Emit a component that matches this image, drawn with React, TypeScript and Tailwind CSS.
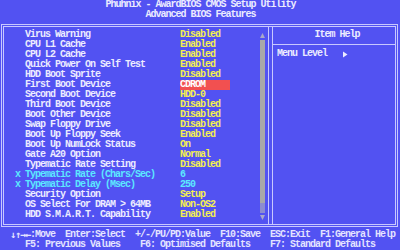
import React from "react";

type Row = { m?: string; label: string; value: string; kind?: "cyan" | "sel" };

const rows: Row[] = [
  { label: "Virus Warning", value: "Disabled" },
  { label: "CPU L1 Cache", value: "Enabled" },
  { label: "CPU L2 Cache", value: "Enabled" },
  { label: "Quick Power On Self Test", value: "Enabled" },
  { label: "HDD Boot Sprite", value: "Disabled" },
  { label: "First Boot Device", value: "CDROM", kind: "sel" },
  { label: "Second Boot Device", value: "HDD-0" },
  { label: "Third Boot Device", value: "Disabled" },
  { label: "Boot Other Device", value: "Disabled" },
  { label: "Swap Floppy Drive", value: "Disabled" },
  { label: "Boot Up Floppy Seek", value: "Enabled" },
  { label: "Boot Up NumLock Status", value: "On" },
  { label: "Gate A20 Option", value: "Normal" },
  { label: "Typematic Rate Setting", value: "Disabled" },
  { m: "x", label: "Typematic Rate (Chars/Sec)", value: "6", kind: "cyan" },
  { m: "x", label: "Typematic Delay (Msec)", value: "250", kind: "cyan" },
  { label: "Security Option", value: "Setup" },
  { label: "OS Select For DRAM > 64MB", value: "Non-OS2" },
  { label: "HDD S.M.A.R.T. Capability", value: "Enabled" },
];

export default function App() {
  return (
    <div
      className="w-[400px] h-[250px] bg-[#5252f2] text-[#ececff] font-bold text-[10px] leading-[10px] tracking-[-1px] overflow-hidden"
      style={{ fontFamily: '"Liberation Mono", "DejaVu Sans Mono", monospace' }}
    >
      <div className="h-[20px] text-center whitespace-pre">
        <div className="h-[10px] pl-[1px]">Phuhnix - AwardBIOS CMOS Setup Utility</div>
        <div className="h-[10px] pl-[1px]">Advanced BIOS Features</div>
      </div>
      <div className="h-[4px]" />
      <div className="ml-[1px] w-[397px] h-[203px] border border-[#c8c8ff] p-[1px]">
        <div className="w-full h-full border border-[#c8c8ff] flex">
          {/* left pane */}
          <div className="w-[262px] flex pt-[3px]">
            <div className="w-[256px]">
              {rows.map((r, i) => {
                const labelColor = r.kind === "cyan" ? "text-[#5ce8ff]" : "text-[#ececff]";
                const valueColor =
                  r.kind === "cyan"
                    ? "text-[#5ce8ff]"
                    : r.kind === "sel"
                    ? "text-white bg-[#f25050]"
                    : "text-[#f4f050]";
                return (
                  <div key={i} className="h-[10px] flex whitespace-pre">
                    <div className={`w-[21px] pl-[11px] ${labelColor}`}>{r.m ?? ""}</div>
                    <div className={`w-[155px] ${labelColor}`}>{r.label}</div>
                    <div className={`w-[50px] h-[10px] ${valueColor}`}>{r.value}</div>
                  </div>
                );
              })}
            </div>
            {/* scrollbar */}
            <div className="w-[5px] flex flex-col items-center">
              <svg width="5" height="7" viewBox="0 0 5 7" className="mt-[2px]">
                <polygon points="2.5,1 5,6 0,6" fill="#a8a8c8" />
              </svg>
              <div className="w-[5px] h-[163px] mt-[1px] bg-[#a8a8a8]" />
              <div className="w-[5px] h-[10px] bg-[#8c8cd0]" />
              <svg width="5" height="7" viewBox="0 0 5 7" className="mt-[1px]">
                <polygon points="0,1 5,1 2.5,6" fill="#a8a8c8" />
              </svg>
            </div>
          </div>
          {/* divider */}
          <div className="w-[2px]" />
          <div className="w-[1px] h-full bg-[#c8c8ff]" />
          <div className="w-[3px]" />
          <div className="w-[1px] h-full bg-[#c8c8ff]" />
          {/* right pane */}
          <div className="flex-1 pt-[3px]">
            <div className="h-[10px] text-center pl-[6px]">Item Help</div>
            <div className="h-[5px] border-b border-[#c8c8ff]" />
            <div className="h-[4px]" />
            <div className="h-[10px] flex items-center whitespace-pre pl-[4px]">
              <span>Menu Level</span>
              <svg width="5" height="7" viewBox="0 0 5 7" className="ml-[16px]">
                <polygon points="0,0.5 4.5,3.5 0,6.5" fill="#ececff" />
              </svg>
            </div>
          </div>
        </div>
      </div>
      <div className="h-[3px]" />
      <div className="whitespace-pre text-[#e4e4ff]">
        <div className="h-[10px] pl-[10px] flex">
          <span className="inline-flex">
            <span className="w-[5px] text-center tracking-normal" style={{ fontFamily: '"DejaVu Sans Mono", monospace' }}>↓</span>
            <span className="w-[5px] text-center tracking-normal" style={{ fontFamily: '"DejaVu Sans Mono", monospace' }}>↑</span>
            <span className="w-[5px] text-center tracking-normal" style={{ fontFamily: '"DejaVu Sans Mono", monospace' }}>→</span>
            <span className="w-[5px] text-center tracking-normal" style={{ fontFamily: '"DejaVu Sans Mono", monospace' }}>←</span>
          </span>
          <span>{":Move  Enter:Select  +/-/PU/PD:Value  F10:Save  ESC:Exit  F1:General Help"}</span>
        </div>
        <div className="h-[10px] pl-[25px]">
          {"F5: Previous Values    F6: Optimised Defaults    F7: Standard Defaults"}
        </div>
      </div>
    </div>
  );
}
